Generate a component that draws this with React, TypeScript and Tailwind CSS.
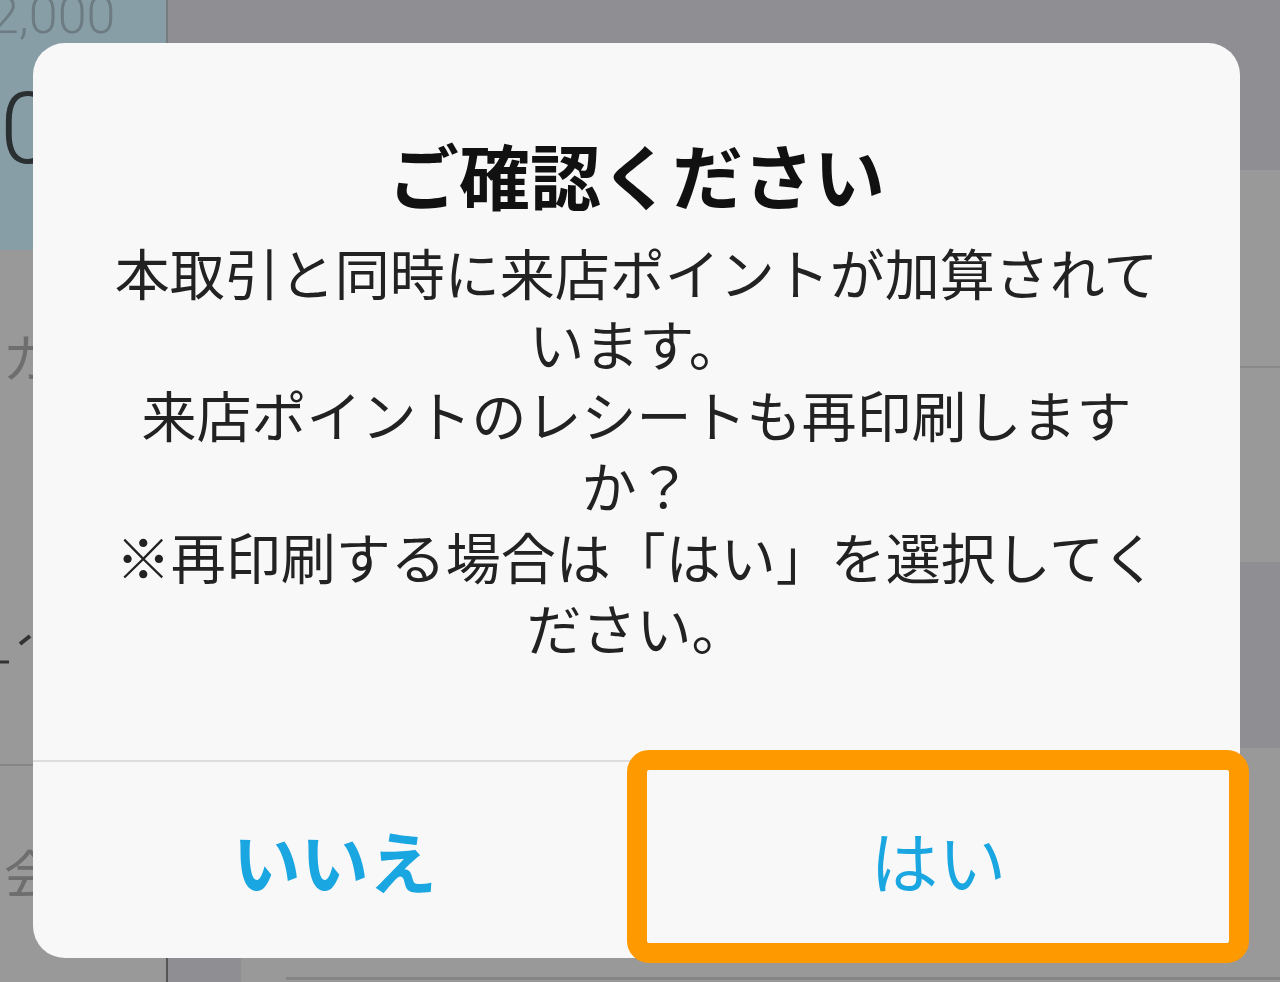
import React from "react";

const jp = { fontFamily: '"Noto Sans CJK JP", "Noto Sans", sans-serif' };

export default function App() {
  return (
    <div className="relative w-[1280px] h-[982px] overflow-hidden bg-[#999999]" style={jp}>
      {/* background screen */}
      <div className="flex flex-col w-full h-full">
        <div className="flex h-[958px]">
          {/* left column */}
          <div className="w-[168px] flex flex-col">
            <div className="h-[250px] bg-[#889ea6] border-r-2 border-[#747c80] flex flex-col overflow-hidden">
              <div
                className="-mt-[14px] -ml-[10px] text-[52px] leading-[60px] font-light text-[#6c7c82]"
                style={{ fontFamily: 'Roboto, "Liberation Sans", sans-serif' }}
              >
                2,000
              </div>
              <div
                className="mt-[28px] ml-[0px] text-[100px] leading-[110px] font-light text-[#2a2f31]"
                style={{ fontFamily: 'Roboto, "Liberation Sans", sans-serif' }}
              >
                0
              </div>
            </div>
            <div className="h-[516px] border-b-2 border-[#858585] flex flex-col">
              <div className="mt-[76px] ml-[2px] text-[52px] leading-[60px] text-[#6e6e6e]">カ</div>
              <svg className="mt-[246px]" width="40" height="40" viewBox="0 0 40 40">
                <line x1="0" y1="30" x2="9" y2="30" stroke="#333" strokeWidth="3" />
                <line x1="20" y1="12" x2="30" y2="4" stroke="#333" strokeWidth="4" />
              </svg>
            </div>
            <div className="flex-1 flex flex-col">
              <div className="mt-[76px] ml-[4px] text-[52px] leading-[60px] text-[#6e6e6e]">会</div>
            </div>
          </div>
          {/* middle */}
          <div className="flex-1 flex flex-col">
            <div className="h-[170px] bg-[#8f8e93]" />
            <div className="flex-1 bg-[#999999]" />
          </div>
          {/* right column */}
          <div className="w-[40px] flex flex-col">
            <div className="h-[170px] bg-[#8f8e93]" />
            <div className="h-[198px] bg-[#999999] border-b-2 border-[#8a8a8a]" />
            <div className="h-[194px] bg-[#999999]" />
            <div className="h-[186px] bg-[#8f8e93]" />
            <div className="flex-1 bg-[#999999]" />
          </div>
        </div>
        <div className="flex-1 flex">
          <div className="w-[166px] bg-[#999999]" />
          <div className="w-[2px] bg-[#555]" />
          <div className="w-[73px] bg-[#8f8e93]" />
          <div className="flex-1 flex flex-col">
            <div className="flex-1" />
            <div className="ml-[45px] h-[3px] bg-[#858585] mb-[2px]" />
          </div>
        </div>
      </div>

      {/* dialog */}
      <div className="absolute left-[33px] top-[43px] w-[1207px] h-[915px] rounded-[32px] bg-[#f8f8f8] flex flex-col overflow-hidden">
        <div className="flex-1 flex flex-col items-center pt-[89px]">
          <div className="text-[71px] leading-[82px] font-bold text-[#111]">ご確認ください</div>
          <div className="mt-[22px] w-[1060px] text-center text-[55px] leading-[71px] text-[#222]">
            本取引と同時に来店ポイントが加算されています。
            <br />
            来店ポイントのレシートも再印刷しますか？
            <br />
            ※再印刷する場合は「はい」を選択してください。
          </div>
        </div>
        <div className="h-[2px] bg-[#dddddd]" />
        <div className="h-[196px] flex">
          <div className="flex-1 flex items-center justify-center text-[68px] font-bold text-[#1aa7e1]">いいえ</div>
          <div className="flex-1 flex items-center justify-center text-[68px] text-[#1aa7e1]">はい</div>
        </div>
      </div>

      {/* highlight */}
      <div className="absolute left-[627px] top-[750px] w-[622px] h-[213px] border-[20px] border-[#ff9900] rounded-[22px]" />
    </div>
  );
}
